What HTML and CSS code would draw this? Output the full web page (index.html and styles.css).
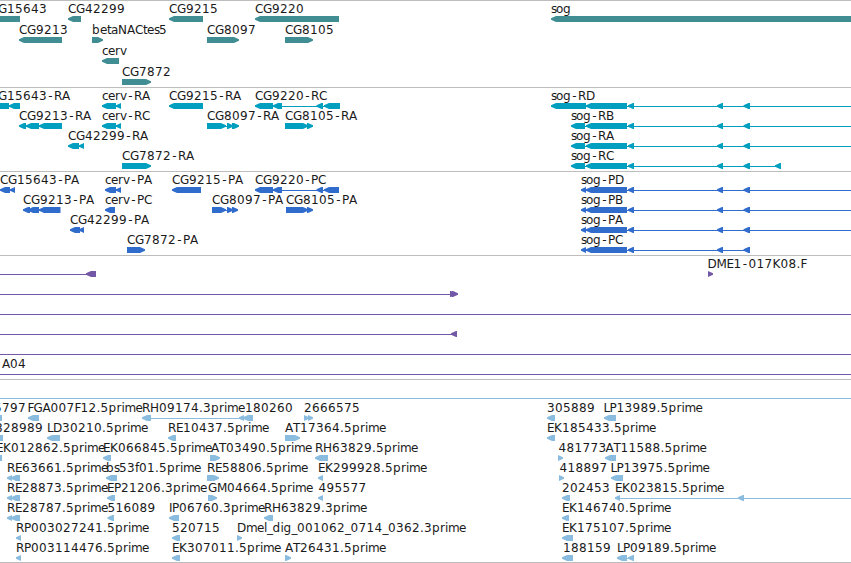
FILE: index.html
```html
<!DOCTYPE html>
<html lang="en">
<head>
  <meta charset="UTF-8">
  <meta name="viewport" content="width=device-width, initial-scale=1.0">
  <title>Genome Browser</title>
  <link rel="stylesheet" href="styles.css">
</head>
<body>
  <div class="browser">
    <svg class="track genes" id="genes"></svg>
    <svg class="track transcripts" id="transcripts"></svg>
    <svg class="track proteins" id="proteins"></svg>
    <svg class="track clones" id="clones"></svg>
    <svg class="track ests" id="ests"></svg>
  </div>
  <script src="tracks.js"></script>
</body>
</html>
```

FILE: styles.css
```css
* {
  box-sizing: border-box;
  margin: 0;
  padding: 0;
}

body {
  background: #fff;
  color: #000;
  font-family: "DejaVu Sans", sans-serif;
  font-size: 12px;
  overflow: hidden;
}

.browser {
  display: flex;
  flex-direction: column;
  width: 851px;
  border-bottom: 1px solid #bdbdbd;
}

.track {
  display: block;
  width: 100%;
  flex: none;
  border-top: 1px solid #bdbdbd;
  overflow: hidden;
}

.track text {
  fill: #1a1a1a;
}

/* Track heights and colors */
.genes {
  height: 87px;
  fill: #408e94;
}

.transcripts {
  height: 84px;
  fill: #009fc0;
}

.proteins {
  height: 84px;
  fill: #306ccc;
}

.clones {
  height: 124px;
  fill: #7458a8;
}

.ests {
  height: 183px;
  fill: #89bcde;
}
```

FILE: tracks.js
```js
const SVG = "http://www.w3.org/2000/svg";
const OFF = 900; // past the right edge

// Glyph advances in whole pixels where possible, digits are 8
const ADVANCE = {
  A: 8, C: 8, D: 9, E: 7, F: 6, G: 9, H: 9, I: 3, K: 8, L: 6, M: 10, N: 9, P: 7, R: 8, T: 7,
  a: 7, b: 8, c: 6, d: 8, e: 7, f: 4, g: 8, i: 3, l: 3, m: 11, o: 7, p: 8, r: 5, s: 5, t: 4, v: 7,
  "-": 7, ".": 4, "_": 5.5
};

const SOG = [[586, 627], [628, 634], [717, 723], [743.5, 750]];

// [row, label, direction, exons, label x (default: start), line end (default: last exon)]
const tracks = {
  genes: [
    [0, "CG15643", "L", [[-20, 20]], -10],
    [0, "CG42299", "L", [[68, 81]]],
    [0, "CG9215", "L", [[169, 203]]],
    [0, "CG9220", "L", [[255, 339]]],
    [0, "sog", "L", [[551, OFF]]],
    [1, "CG9213", "L", [[19, 62]]],
    [1, "betaNACtes5", "R", [[92, 103]]],
    [1, "CG8097", "R", [[207, 239]]],
    [1, "CG8105", "R", [[285, 313]]],
    [2, "cerv", "L", [[102, 119]]],
    [3, "CG7872", "R", [[122, 151]]]
  ],
  transcripts: [
    [0, "CG15643-RA", "L", [[-20, 9], [9, 20]], -10],
    [0, "cerv-RA", "L", [[102, 116], [116, 121]]],
    [0, "CG9215-RA", "L", [[169, 203]]],
    [0, "CG9220-RC", "L", [[255, 273], [273, 282], [316.5, 323], [324, 340]]],
    [0, "sog-RD", "L", [[551, 586], ...SOG], 551, OFF],
    [1, "CG9213-RA", "L", [[19, 26], [26, 39], [39, 62]]],
    [1, "cerv-RC", "L", [[102, 116], [116, 121]]],
    [1, "CG8097-RA", "R", [[207, 226], [227, 233], [232, 239]]],
    [1, "CG8105-RA", "R", [[285, 308], [307, 313]]],
    [1, "sog-RB", "L", [[571, 585], ...SOG], 571, OFF],
    [2, "CG42299-RA", "L", [[68, 79], [79, 84]]],
    [2, "sog-RA", "L", [[571, 585], ...SOG], 571, OFF],
    [3, "CG7872-RA", "R", [[122, 151]]],
    [3, "sog-RC", "L", [[571, 585], ...SOG, [775, 781]]]
  ],
  proteins: [
    [0, "CG15643-PA", "L", [[0, 10], [10, 15]]],
    [0, "cerv-PA", "L", [[105, 116], [116, 121]]],
    [0, "CG9215-PA", "L", [[172, 201]]],
    [0, "CG9220-PC", "L", [[255, 273], [273, 282], [316.5, 323], [324, 339]]],
    [0, "sog-PD", "L", [[581, 586], ...SOG], 581, OFF],
    [1, "CG9213-PA", "L", [[23, 30], [28, 39], [39, 60.5]]],
    [1, "cerv-PC", "L", [[105, 115]]],
    [1, "CG8097-PA", "R", [[212, 226], [227, 233], [232, 238]]],
    [1, "CG8105-PA", "R", [[286, 308], [307, 313]]],
    [1, "sog-PB", "L", [[581, 586], ...SOG], 581, OFF],
    [2, "CG42299-PA", "L", [[70, 80], [79, 84]]],
    [2, "sog-PA", "L", [[581, 586], ...SOG], 581, OFF],
    [3, "CG7872-PA", "R", [[127, 145]]],
    [3, "sog-PC", "L", [[581, 586], ...SOG]]
  ],
  clones: [
    [0, "", "L", [[-20, -10], [86, 96]]],
    [0, "DME1-017K08.F", "R", [[708, 713]], 707.5],
    [1, "", "R", [[-20, -10], [450, 456], [452, 458]]],
    [2, "", "L", [[-20, -10]], 0, OFF],
    [3, "", "L", [[-20, -10], [451, 457]]],
    [4, "", "L", [[-20, -10]], 0, OFF],
    [5, "A04", "L", [[-20, -10]], 2, OFF]
  ],
  ests: [
    [0, "", "L", [[-20, -10]], 0, OFF],
    [1, "5797", "L", [[-8, 2]], -6],
    [1, "FGA007F12.5prime", "L", [[28, 39]], 27.5],
    [1, "RH09174.3prime", "L", [[142, 151], [239, 244]]],
    [1, "180260", "L", [[243, 253]], 245],
    [1, "2666575", "R", [[304, 309], [308, 313]]],
    [1, "305889", "L", [[547, 555]]],
    [1, "LP13989.5prime", "L", [[604, 616]], 603.5],
    [2, "828989", "L", [[-8, 3]], -5],
    [2, "LD30210.5prime", "L", [[47, 60]]],
    [2, "RE10437.5prime", "L", [[168, 176]]],
    [2, "AT17364.5prime", "R", [[285, 300]]],
    [2, "EK185433.5prime", "L", [[547, 555]]],
    [3, "EK012862.5prime", "L", [[-8, 2]], -4],
    [3, "EK066845.5prime", "L", [[103, 111]]],
    [3, "AT03490.5prime", "R", [[210, 220]], 211],
    [3, "RH63829.5prime", "L", [[315, 328]]],
    [3, "481773", "R", [[558, 563]], 558.5],
    [3, "AT11588.5prime", "L", [[605, 616]], 605.5],
    [4, "RE63661.5prime", "L", [[7, 12], [11, 20]]],
    [4, "bs53f01.5prime", "L", [[106, 117]]],
    [4, "RE58806.5prime", "R", [[207, 219]]],
    [4, "EK299928.5prime", "L", [[318, 323]]],
    [4, "418897", "R", [[559, 564]], 559.5],
    [4, "LP13975.5prime", "L", [[611, 623]], 610.5],
    [5, "RE28873.5prime", "L", [[7, 12], [11, 20]]],
    [5, "EP21206.3prime", "L", [[107, 115]]],
    [5, "GM04664.5prime", "R", [[208, 217]]],
    [5, "495577", "L", [[318, 323]], 318.5],
    [5, "202453", "L", [[562, 570]]],
    [5, "EK023815.5prime", "L", [[615, 620], [738, 744]], 615, OFF],
    [6, "RE28787.5prime", "L", [[7, 12], [11, 20]]],
    [6, "516089", "L", [[107.5, 114]]],
    [6, "IP06760.3prime", "L", [[169, 179]]],
    [6, "RH63829.3prime", "L", [[264, 273]]],
    [6, "EK146740.5prime", "L", [[562, 569]]],
    [7, "RP003027241.5prime", "L", [[16, 21]]],
    [7, "520715", "L", [[172, 180]]],
    [7, "Dmel_dig_001062_0714_0362.3prime", "R", [[237, 242]]],
    [7, "EK175107.5prime", "L", [[562, 573]]],
    [8, "RP003114476.5prime", "L", [[16, 21]]],
    [8, "EK307011.5prime", "L", [[172, 180]]],
    [8, "AT26431.5prime", "R", [[285, 291]]],
    [8, "188159", "L", [[562, 573]], 563],
    [8, "LP09189.5prime", "L", [[617, 627], [628, 634]]]
  ]
};

function add(parent, name, attrs) {
  const el = document.createElementNS(SVG, name);
  Object.entries(attrs).forEach(([key, value]) => el.setAttribute(key, value));
  parent.appendChild(el);
  return el;
}

// Exon box with a slightly blunt tip
function arrow(x1, x2, y, dir) {
  const tip = Math.min(5, x2 - x1);
  if (dir === "L") {
    return `${x1},${y + 2.3} ${x1 + tip},${y} ${x2},${y} ${x2},${y + 6} ${x1 + tip},${y + 6} ${x1},${y + 3.7}`;
  }
  return `${x1},${y} ${x2 - tip},${y} ${x2},${y + 2.3} ${x2},${y + 3.7} ${x2 - tip},${y + 6} ${x1},${y + 6}`;
}

function drawLabel(svg, label, x, y) {
  const xs = [];
  for (const ch of label) {
    xs.push(ch === "-" ? x + 1.2 : x);
    x += ADVANCE[ch] || 8;
  }
  add(svg, "text", { x: xs.join(" "), y: y }).textContent = label;
}

Object.entries(tracks).forEach(([id, features]) => {
  const svg = document.getElementById(id);
  const pitch = id === "genes" ? 21 : 20;

  features.forEach(([row, label, dir, exons, labelX, lineEnd]) => {
    const y = 15 + row * pitch;
    const start = exons[0][0];
    const end = lineEnd || exons[exons.length - 1][1];

    // intron line
    if (exons.length > 1 || lineEnd) {
      add(svg, "rect", { x: start + 2, y: y + 3, width: end - start - 4, height: 1 });
    }
    exons.forEach(([x1, x2]) => add(svg, "polygon", { points: arrow(x1, x2, y, dir) }));

    if (label) {
      drawLabel(svg, label, labelX === undefined ? start : labelX, y - 3);
    }
  });
});
```
